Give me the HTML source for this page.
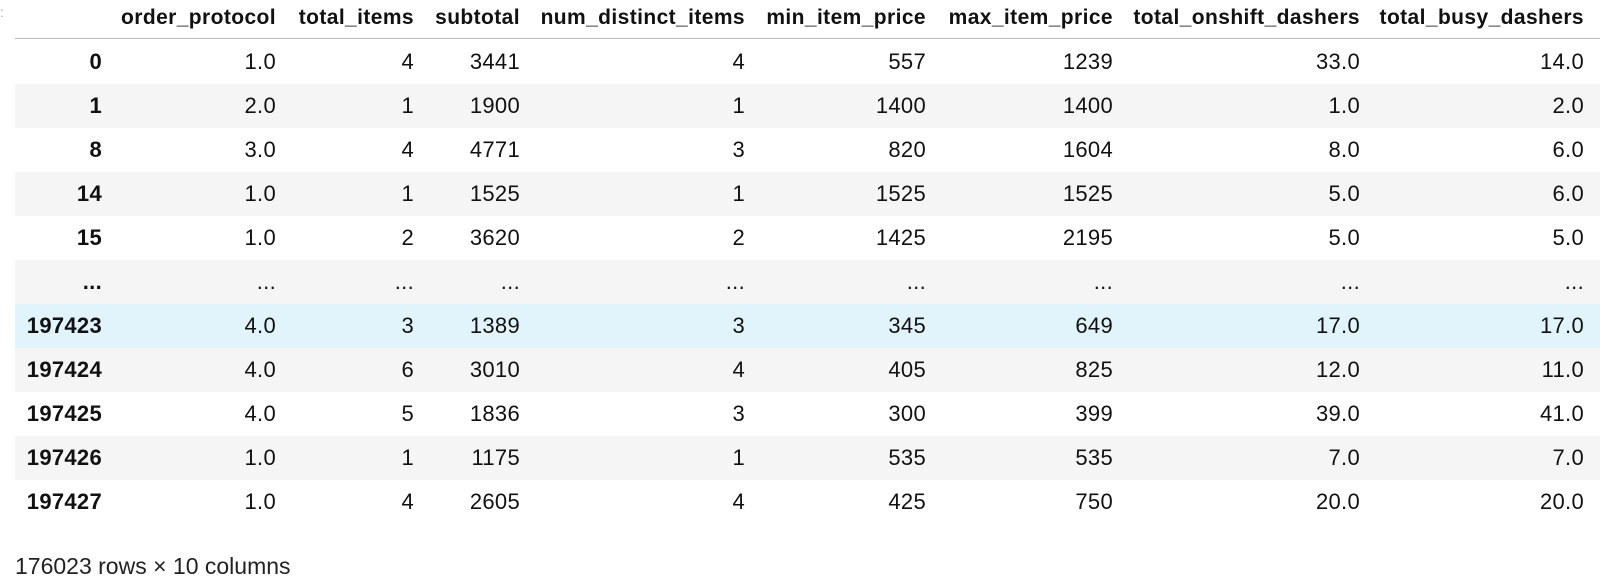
<!DOCTYPE html>
<html><head><meta charset="utf-8"><style>
body{margin:0;width:1600px;height:585px;background:#fff;font-family:"Liberation Sans",Arial,sans-serif;font-size:22px;color:#111;position:relative;overflow:hidden}
.r{position:absolute;left:15px;right:0;height:44px}
.g{background:#f5f5f5}.h{background:#e1f3fb}
.c{position:absolute;white-space:nowrap;text-align:right;line-height:44px;top:0;letter-spacing:0.3px}
.b{font-weight:bold}
.hd .c{font-size:21px;letter-spacing:0.4px}
.hl{position:absolute;left:15px;right:0;top:38px;height:1px;background:#bbb}
</style></head><body>
<div style="position:absolute;left:0;top:4px;font-size:14px;color:#aaa">:</div>
<div id="t"></div>
<div class="hl"></div>
<div style="position:absolute;left:15px;top:552px;font-size:23px;line-height:28px;color:#222">176023 rows × 10 columns</div>
<script>
var R=[102,276,414,520,745,926,1113,1360,1584];
var H=["","order_protocol","total_items","subtotal","num_distinct_items","min_item_price","max_item_price","total_onshift_dashers","total_busy_dashers"];
var D=[["0","1.0","4","3441","4","557","1239","33.0","14.0"],["1","2.0","1","1900","1","1400","1400","1.0","2.0"],["8","3.0","4","4771","3","820","1604","8.0","6.0"],["14","1.0","1","1525","1","1525","1525","5.0","6.0"],["15","1.0","2","3620","2","1425","2195","5.0","5.0"],["...","...","...","...","...","...","...","...","..."],["197423","4.0","3","1389","3","345","649","17.0","17.0"],["197424","4.0","6","3010","4","405","825","12.0","11.0"],["197425","4.0","5","1836","3","300","399","39.0","41.0"],["197426","1.0","1","1175","1","535","535","7.0","7.0"],["197427","1.0","4","2605","4","425","750","20.0","20.0"]];
var h='<div class="r hd" style="top:-4px">';
H.forEach(function(x,i){h+='<span class="c b" style="right:'+(1600-R[i])+'px">'+x+'</span>'});
h+='</div>';
D.forEach(function(row,j){var cls=j==6?'h':(j%2==1?'g':'');h+='<div class="r '+cls+'" style="top:'+(40+j*44)+'px">';row.forEach(function(x,i){h+='<span class="c'+(i==0?' b':'')+'" style="right:'+(1600-R[i])+'px">'+x+'</span>'});h+='</div>'});
document.getElementById('t').innerHTML=h;
</script>
</body></html>
